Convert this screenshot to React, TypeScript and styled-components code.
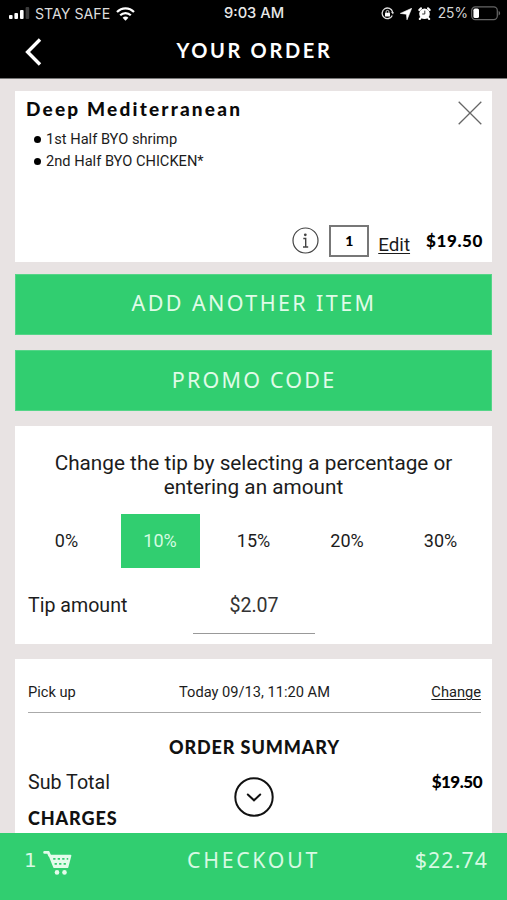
import React from "react";
import styled, { createGlobalStyle } from "styled-components";

const GREEN = "#31ce70";

const GlobalStyle = createGlobalStyle`
  * { box-sizing: border-box; }
  body {
    margin: 0;
    background: #e8e3e3;
    font-family: Roboto, sans-serif;
    color: #1c1c1c;
  }
  button { font: inherit; border: 0; padding: 0; margin: 0; color: inherit; background: none; }
  svg { display: block; flex: none; }
`;

const Screen = styled.div`
  display: flex;
  flex-direction: column;
  width: 507px;
  height: 900px;
  overflow: hidden;
  background: #e8e3e3;
`;

const TopArea = styled.header`
  flex: none;
  height: 79px;
  background: #000;
  color: #fff;
  border-bottom: 1px solid #777;
`;

const StatusBar = styled.div`
  display: grid;
  grid-template-columns: 1fr auto 1fr;
  align-items: center;
  height: 27px;
  padding: 0 6px 0 9px;
  font-family: Inter, sans-serif;
  line-height: 27px;
`;

const StatusGroup = styled.div<{ $end?: boolean }>`
  display: flex;
  align-items: center;
  justify-content: ${(p) => (p.$end ? "flex-end" : "flex-start")};
`;

const Carrier = styled.span`
  margin: 0 6px 0 5px;
  font-size: 14.2px;
  color: #ddd;
`;

const Clock = styled.span`
  font-size: 14.7px;
  font-weight: 500;
  color: #e8e8e8;
  padding-right: 2px;
`;

const BatteryLevel = styled.span`
  margin: 0 3px 0 7px;
  font-size: 13.8px;
  color: #d6d6d6;
`;

const TitleBar = styled.div`
  display: grid;
  grid-template-columns: 60px 1fr 60px;
  align-items: center;
  height: 48px;
`;

const BackButton = styled.button`
  padding: 2px 0 0 24px;
`;

const PageTitle = styled.h1`
  margin: 0;
  text-align: center;
  font: 700 20px/46px Lato, sans-serif;
  letter-spacing: 2.65px;
  text-indent: 2px;
  padding-bottom: 2px;
`;

const Content = styled.main`
  flex: 1;
  min-height: 0;
  overflow: hidden;
  display: flex;
  flex-direction: column;
  gap: 15px;
  padding: 12px 15px 0;
`;

const Card = styled.section<{ $height: number }>`
  flex: none;
  height: ${(p) => p.$height}px;
  background: #fff;
`;

const ItemCard = styled(Card)`
  display: flex;
  flex-direction: column;
  justify-content: space-between;
  margin-bottom: -3px;
`;

const ItemHead = styled.div`
  display: flex;
  justify-content: space-between;
  padding: 5px 10px 0 11px;
`;

const ItemName = styled.h2`
  margin: 0;
  font: 900 19px/25px Lato, sans-serif;
  letter-spacing: 2.2px;
  color: #0a0a0a;
`;

const OptionList = styled.ul`
  margin: 7px 0 0;
  padding: 0 0 0 8px;
  list-style: none;
`;

const OptionLine = styled.li`
  display: flex;
  align-items: center;
  gap: 5px;
  height: 22px;
  font-size: 14.65px;
  line-height: 22px;
  &::before {
    content: "";
    width: 7px;
    height: 7px;
    border-radius: 50%;
    background: #000;
  }
`;

const RemoveButton = styled.button`
  align-self: flex-start;
  padding-top: 5px;
`;

const ItemActions = styled.div`
  display: flex;
  align-items: center;
  justify-content: flex-end;
  height: 33px;
  margin-bottom: 5px;
  padding-right: 9px;
`;

const Quantity = styled.span`
  width: 40px;
  height: 32px;
  margin: 0 10px;
  border: 2px solid #777;
  text-align: center;
  font: 900 14px/28px Lato, sans-serif;
  color: #000;
`;

const TextLink = styled.a<{ $size: number }>`
  font-size: ${(p) => p.$size}px;
  text-decoration: underline;
  text-decoration-thickness: 1px;
  text-underline-offset: 2px;
`;

const EditLink = styled(TextLink)`
  margin: 0 16px 0 -1px;
  padding-top: 8px;
`;

const Price = styled.span<{ $spacing: number }>`
  font: 900 17px/24px Lato, sans-serif;
  letter-spacing: ${(p) => p.$spacing}px;
  color: #000;
`;

const ActionButton = styled.button<{ $spacing: number; $line: number }>`
  flex: none;
  width: 100%;
  height: 61px;
  background: ${GREEN};
  border: 1px solid #55d588;
  color: #e0fbe8;
  font: 400 21.5px/${(p) => p.$line}px "Noto Sans", sans-serif;
  letter-spacing: ${(p) => p.$spacing}px;
  text-indent: 1px;
  display: flex;
  justify-content: center;
`;

const TipCard = styled(Card)`
  padding: 25px 12px 0;
`;

const TipPrompt = styled.p`
  margin: 0 auto;
  width: 420px;
  text-align: center;
  font-size: 20.75px;
  line-height: 24px;
`;

const TipOptions = styled.div`
  display: grid;
  grid-template-columns: repeat(5, 79px);
  justify-content: space-between;
  margin-top: 15px;
  height: 54px;
`;

const TipOption = styled.button<{ $selected?: boolean }>`
  background: ${(p) => (p.$selected ? GREEN : "#fff")};
  color: ${(p) => (p.$selected ? "#d5fbe1" : "#1c1c1c")};
  font-size: 18px;
  line-height: 54px;
`;

const TipAmountRow = styled.label`
  display: grid;
  grid-template-columns: 165px 122px 1fr;
  height: 54px;
  margin-top: 10px;
  font-size: 19.6px;
  line-height: 55px;
  padding-left: 1px;
`;

const TipAmount = styled.span`
  border-bottom: 1.5px solid #999;
  text-align: center;
  color: #333;
`;

const SummaryCard = styled(Card)`
  padding: 13px 11px 0 13px;
`;

const PickupRow = styled.div`
  display: grid;
  grid-template-columns: 1fr auto 1fr;
  height: 41px;
  border-bottom: 1.5px solid #aaa;
  font-size: 14.65px;
  line-height: 40px;
  & > :last-child { justify-self: end; }
`;

const SummaryTitle = styled.h3`
  margin: 22px 0 0;
  text-align: center;
  font: 900 18px/24px Lato, sans-serif;
  letter-spacing: 0.9px;
  color: #111;
`;

const TotalRow = styled.div`
  display: grid;
  grid-template-columns: 1fr auto 1fr;
  height: 46px;
  margin: 11px -1px 0 0;
  font-size: 19.7px;
  line-height: 26px;
  & > :last-child { justify-self: end; }
`;

const ExpandButton = styled.button`
  align-self: start;
  margin: 7px 2px 0 0;
`;

const ChargesTitle = styled.h3`
  margin: -10px 0 0;
  font: 900 18px/24px Lato, sans-serif;
  letter-spacing: 0.9px;
  color: #111;
`;

const CheckoutBar = styled.footer`
  flex: none;
  display: grid;
  grid-template-columns: 1fr auto 1fr;
  height: 67px;
  padding: 0 19px;
  background: ${GREEN};
  color: #d8f9e3;
  font: 400 21.3px/53px "Noto Sans", sans-serif;
`;

const CartInfo = styled.div`
  display: flex;
  align-items: flex-start;
  gap: 6px;
  padding-left: 5px;
  font: 400 20px/55px "DejaVu Sans", sans-serif;
  & > svg { margin-top: 17px; }
`;

const CheckoutLabel = styled.span`
  letter-spacing: 2.7px;
`;

const CheckoutTotal = styled.span`
  justify-self: end;
  letter-spacing: 1.1px;
`;

const SignalIcon = () => (
  <svg width="21" height="13" viewBox="0 0 21 13">
    <rect x="0" y="8" width="3.6" height="4" rx="1" fill="#fff" />
    <rect x="5.4" y="6" width="3.6" height="6" rx="1" fill="#fff" />
    <rect x="11" y="3" width="3.6" height="9" rx="1" fill="#fff" />
    <rect x="16.6" y="0" width="3.6" height="12" rx="1" fill="#3c3c3c" />
  </svg>
);

const WifiIcon = () => (
  <svg width="19" height="14" viewBox="0 0 19 14" fill="none" stroke="#fff" strokeWidth="2.2">
    <path d="M1 5.1C5.8.2 13.2.2 18 5.1" />
    <path d="M4.2 8.3c3-3 7.6-3 10.6 0" />
    <path d="M9.5 13.8 6.6 10.8c1.6-1.6 4.2-1.6 5.8 0z" fill="#fff" stroke="none" />
  </svg>
);

const RotationLockIcon = () => (
  <svg width="13" height="13" viewBox="0 0 13 13" fill="none" stroke="#ddd" strokeWidth="1.3">
    <path d="M11.6 5A5.3 5.3 0 1 0 11.3 8.5" />
    <path d="M10 5h2.8L12 7.6z" fill="#ddd" stroke="none" />
    <rect x="4" y="5.8" width="5" height="3.6" rx=".5" fill="#fff" stroke="none" />
    <path d="M5.1 6V4.8a1.4 1.4 0 0 1 2.8 0V6" strokeWidth="1" />
  </svg>
);

const LocationIcon = () => (
  <svg width="12" height="12" viewBox="0 0 12 12">
    <path d="M11.7.3 7 11.8 6.4 6.2.3 5.4z" fill="#fff" stroke="#fff" strokeWidth=".6" />
  </svg>
);

const AlarmIcon = () => (
  <svg width="13" height="13" viewBox="0 0 13 13">
    <circle cx="6.5" cy="6.8" r="5.3" fill="#fff" />
    <path d="M1.3 3 3 1.3M11.7 3 10 1.3M2.8 10.8l-1 1.2M10.2 10.8l1 1.2" stroke="#fff" strokeWidth="2" strokeLinecap="round" />
    <path d="M6.8 3.6V7H4.2" fill="none" stroke="#333" strokeWidth="1" />
  </svg>
);

const BatteryIcon = () => (
  <svg width="30" height="15" viewBox="0 0 30 15">
    <rect x=".7" y=".9" width="25.6" height="12.8" rx="3.6" fill="none" stroke="#666" strokeWidth="1.2" />
    <rect x="2.4" y="2.6" width="5.6" height="9.4" rx="1.6" fill="#fff" />
    <path d="M27.6 5.1c2 .7 2 3.7 0 4.4z" fill="#666" />
  </svg>
);

const BackIcon = () => (
  <svg width="18" height="28" viewBox="0 0 18 28" fill="none" stroke="#fff" strokeWidth="3.4">
    <path d="M16 1.5 3.6 14 16 26.5" />
  </svg>
);

const CloseIcon = () => (
  <svg width="24" height="24" viewBox="0 0 24 24" stroke="#666" strokeWidth="1.3">
    <path d="M.7.7 23.3 23.3M23.3.7.7 23.3" />
  </svg>
);

const InfoIcon = () => (
  <svg width="27" height="27" viewBox="0 0 27 27" fill="none" stroke="#444" strokeWidth="1.2">
    <circle cx="13.5" cy="13.5" r="12.5" />
    <circle cx="13.3" cy="7.8" r="1.4" fill="#444" stroke="none" />
    <path d="M11.3 11.5h2.4v8.3M11 20h5.2" strokeWidth="1.4" />
  </svg>
);

const ExpandIcon = () => (
  <svg width="40" height="40" viewBox="0 0 40 40" fill="none" stroke="#111" strokeWidth="2">
    <circle cx="20" cy="20" r="18.7" />
    <path d="m13.8 17.5 6.2 5.8 6.2-5.8" strokeLinecap="round" />
  </svg>
);

const CartIcon = () => (
  <svg width="29" height="26" viewBox="0 0 29 26">
    <path d="M1.6 2.4h3.6l1.4 3" fill="none" stroke="#e4fbeb" strokeWidth="2.8" strokeLinecap="round" />
    <path d="M5.2 4.7h22.1a1 1 0 0 1 1 1.3l-3 11.4a1 1 0 0 1-1 .7H11.5a1.4 1.4 0 0 1-1.3-.9z" fill="#e4fbeb" />
    <g stroke={GREEN} strokeWidth="1.9" strokeDasharray="2.3 2.2">
      <path d="M10.2 8.9h15" />
      <path d="M11.6 13.9h12" />
    </g>
    <circle cx="14" cy="22.4" r="2.3" fill="#e4fbeb" />
    <circle cx="21.5" cy="22.4" r="2.3" fill="#e4fbeb" />
  </svg>
);

const StatusIcons = styled.div`
  display: flex;
  align-items: center;
  gap: 6px;
`;

const itemOptions = ["1st Half BYO shrimp", "2nd Half BYO CHICKEN*"];
const tips = ["0%", "10%", "15%", "20%", "30%"];

export default function App() {
  return (
    <Screen>
      <GlobalStyle />
      <TopArea>
        <StatusBar>
          <StatusGroup>
            <SignalIcon />
            <Carrier>STAY SAFE</Carrier>
            <WifiIcon />
          </StatusGroup>
          <Clock>9:03 AM</Clock>
          <StatusGroup $end>
            <StatusIcons>
              <RotationLockIcon />
              <LocationIcon />
              <AlarmIcon />
            </StatusIcons>
            <BatteryLevel>25%</BatteryLevel>
            <BatteryIcon />
          </StatusGroup>
        </StatusBar>
        <TitleBar>
          <BackButton aria-label="Back">
            <BackIcon />
          </BackButton>
          <PageTitle>YOUR ORDER</PageTitle>
        </TitleBar>
      </TopArea>

      <Content>
        <ItemCard $height={171}>
          <ItemHead>
            <div>
              <ItemName>Deep Mediterranean</ItemName>
              <OptionList>
                {itemOptions.map((option) => (
                  <OptionLine key={option}>{option}</OptionLine>
                ))}
              </OptionList>
            </div>
            <RemoveButton aria-label="Remove item">
              <CloseIcon />
            </RemoveButton>
          </ItemHead>
          <ItemActions>
            <InfoIcon />
            <Quantity>1</Quantity>
            <EditLink $size={18.8}>Edit</EditLink>
            <Price $spacing={0.6}>$19.50</Price>
          </ItemActions>
        </ItemCard>

        <ActionButton $spacing={2.4} $line={55}>ADD ANOTHER ITEM</ActionButton>
        <ActionButton $spacing={2.2} $line={57}>PROMO CODE</ActionButton>

        <TipCard $height={218}>
          <TipPrompt>Change the tip by selecting a percentage or entering an amount</TipPrompt>
          <TipOptions>
            {tips.map((tip) => (
              <TipOption key={tip} $selected={tip === "10%"}>
                {tip}
              </TipOption>
            ))}
          </TipOptions>
          <TipAmountRow>
            <span>Tip amount</span>
            <TipAmount>$2.07</TipAmount>
          </TipAmountRow>
        </TipCard>

        <SummaryCard $height={180}>
          <PickupRow>
            <span>Pick up</span>
            <span>Today 09/13, 11:20 AM</span>
            <TextLink $size={14.65}>Change</TextLink>
          </PickupRow>
          <SummaryTitle>ORDER SUMMARY</SummaryTitle>
          <TotalRow>
            <span>Sub Total</span>
            <ExpandButton aria-label="Show all">
              <ExpandIcon />
            </ExpandButton>
            <Price $spacing={-0.5}>$19.50</Price>
          </TotalRow>
          <ChargesTitle>CHARGES</ChargesTitle>
        </SummaryCard>
      </Content>

      <CheckoutBar>
        <CartInfo>
          1
          <CartIcon />
        </CartInfo>
        <CheckoutLabel>CHECKOUT</CheckoutLabel>
        <CheckoutTotal>$22.74</CheckoutTotal>
      </CheckoutBar>
    </Screen>
  );
}
